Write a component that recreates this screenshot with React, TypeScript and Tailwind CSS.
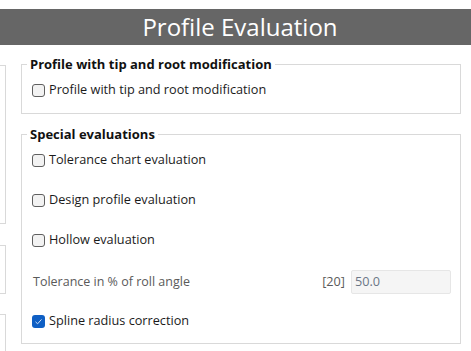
import React from 'react';

const Box: React.FC<{ checked?: boolean }> = ({ checked }) =>
  checked ? (
    <span className="w-[13px] h-[13px] rounded-[3px] bg-[#0f5fc4] flex items-center justify-center shrink-0">
      <svg width="9" height="9" viewBox="0 0 9 9" fill="none">
        <path d="M1.5 4.8 L3.6 6.8 L7.5 2.4" stroke="#cfe0f5" strokeWidth="1" />
      </svg>
    </span>
  ) : (
    <span className="w-[13px] h-[13px] rounded-[3px] border border-[#5f5f5f] bg-[#f2f2f2] shrink-0" />
  );

const Check: React.FC<{ label: string; checked?: boolean; className?: string }> = ({ label, checked, className }) => (
  <div className={`h-[20px] flex items-center gap-[4px] pl-[10px] ${className ?? ''}`}>
    <Box checked={checked} />
    <span className="text-[12.7px] text-[#1b1b1b]">{label}</span>
  </div>
);

export default function App() {
  return (
    <div className="w-[471px] h-[351px] bg-white overflow-hidden font-['Open_Sans',sans-serif]">
      <div className="h-[9px]" />
      <div className="h-[36px] bg-[#666666] text-white text-[24px] flex items-center justify-center pl-[9px]">
        Profile Evaluation
      </div>

      <div className="flex">
        {/* clipped left column */}
        <div className="w-[6px] shrink-0 flex flex-col">
          <div className="mt-[20px] h-[159px] border border-l-0 border-[#d9d9d9]" />
          <div className="mt-[21px] h-[49px] border border-l-0 border-[#d9d9d9]" />
          <div className="mt-[20px] h-[60px] border border-l-0 border-[#d9d9d9]" />
        </div>

        <div className="ml-[15px] w-[440px] flex flex-col">
          <fieldset className="mt-[10px] border border-[#d9d9d9] pt-[7px] pb-[13px]">
            <legend className="ml-[5px] px-[3px] text-[13px] font-bold text-[#111] leading-[18px]">
              Profile with tip and root modification
            </legend>
            <Check label="Profile with tip and root modification" />
          </fieldset>

          <fieldset className="mt-[11px] border border-[#d9d9d9] pt-[7px] pb-[12px]">
            <legend className="ml-[5px] px-[3px] text-[13px] font-bold text-[#111] leading-[18px]">
              Special evaluations
            </legend>
            <Check label="Tolerance chart evaluation" />
            <Check label="Design profile evaluation" className="mt-[20px]" />
            <Check label="Hollow evaluation" className="mt-[20px]" />
            <div className="mt-[20px] h-[24px] flex items-center pl-[11px] pr-[9px]">
              <span className="text-[12.5px] text-[#5a5a5a] flex-1">Tolerance in % of roll angle</span>
              <span className="text-[12.7px] text-[#5a5a5a] mr-[6px]">[20]</span>
              <div className="w-[100px] h-[24px] bg-[#f5f5f5] border border-[#e6e6e6] rounded-[2px] flex items-center px-[3px] text-[12.7px] text-[#6b7686]">
                50.0
              </div>
            </div>
            <Check label="Spline radius correction" checked className="mt-[17px]" />
          </fieldset>
        </div>
      </div>
    </div>
  );
}
